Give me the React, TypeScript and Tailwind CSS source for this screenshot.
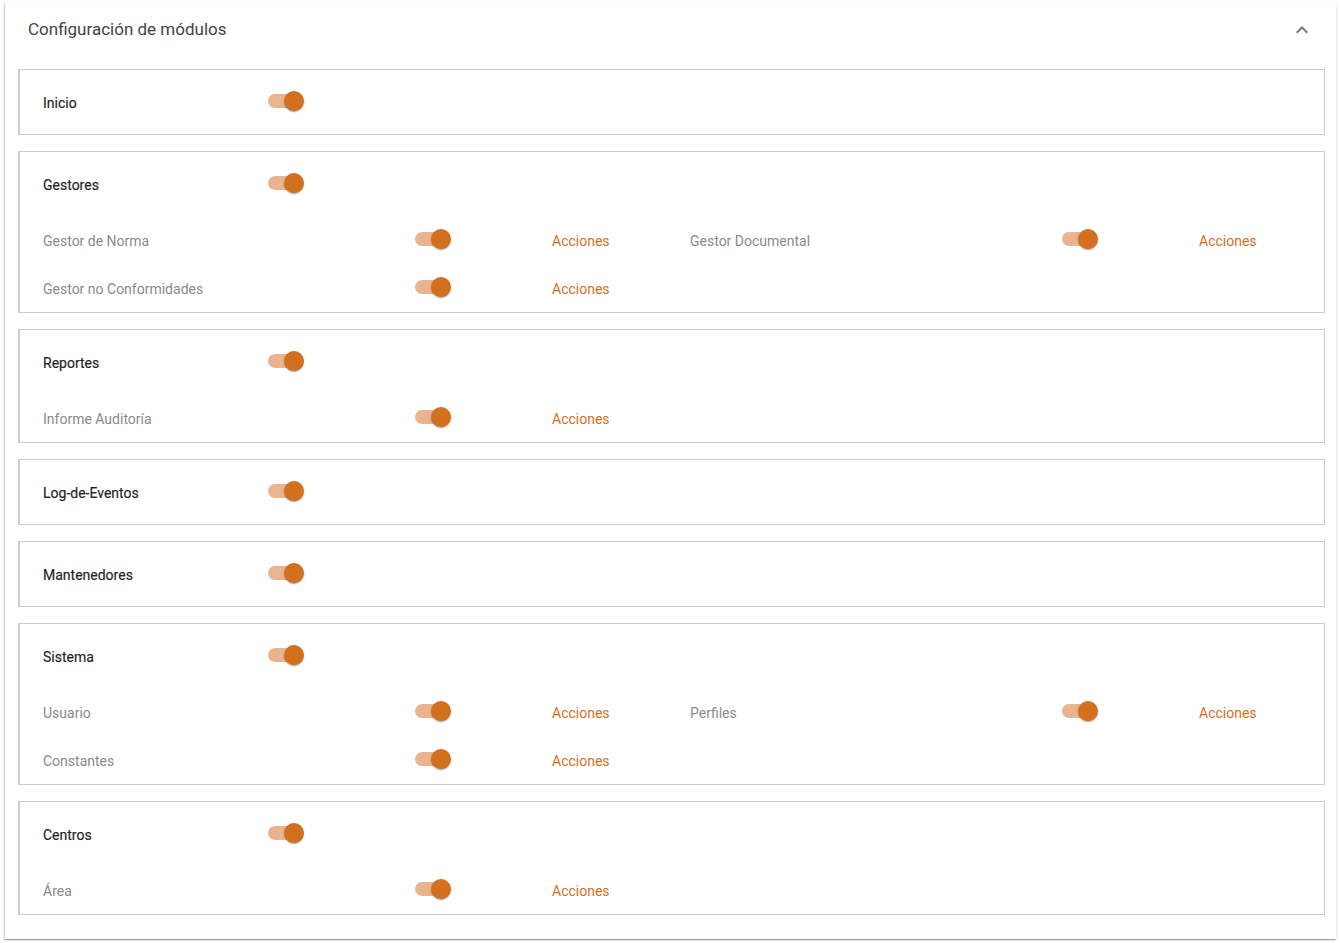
import React from "react";

type Sub = { label: string };
type Mod = { title: string; subs: Sub[] };

const modules: Mod[] = [
  { title: "Inicio", subs: [] },
  {
    title: "Gestores",
    subs: [
      { label: "Gestor de Norma" },
      { label: "Gestor Documental" },
      { label: "Gestor no Conformidades" },
    ],
  },
  { title: "Reportes", subs: [{ label: "Informe Auditoría" }] },
  { title: "Log-de-Eventos", subs: [] },
  { title: "Mantenedores", subs: [] },
  {
    title: "Sistema",
    subs: [{ label: "Usuario" }, { label: "Perfiles" }, { label: "Constantes" }],
  },
  { title: "Centros", subs: [{ label: "Área" }] },
];

function Toggle() {
  return (
    <span className="relative inline-block w-[36px] h-[20px] shrink-0 -translate-y-[2px]">
      <span className="absolute left-0 top-[3px] w-[34px] h-[14px] rounded-full bg-[#e9b48f]" />
      <span className="absolute right-0 top-0 w-[20px] h-[20px] rounded-full bg-[#d2701d] shadow-[0_2px_1px_-1px_rgba(0,0,0,0.2),0_1px_1px_0_rgba(0,0,0,0.14),0_1px_3px_0_rgba(0,0,0,0.12)]" />
    </span>
  );
}

function SubItem({ label }: Sub) {
  return (
    <div className="flex items-center h-[48px]">
      <span className="w-[372px] text-[14px] text-[#8a8a8a]">{label}</span>
      <span className="w-[137px] flex items-center">
        <Toggle />
      </span>
      <span className="text-[14px] text-[#d2701d] cursor-pointer">Acciones</span>
    </div>
  );
}

function ModuleBox({ mod }: { mod: Mod }) {
  return (
    <div className="border border-[#cdcdcd] border-l-2 pt-[9px] pb-[7px] pl-[23px]">
      <div className="flex items-center h-[48px]">
        <span className="w-[225px] text-[14px] font-normal text-[#222222] [-webkit-text-stroke:0.15px_#222222]">
          {mod.title}
        </span>
        <Toggle />
      </div>
      {mod.subs.length > 0 && (
        <div className="grid grid-cols-[647px_647px] mt-[8px] -mb-[8px]">
          {mod.subs.map((s) => (
            <SubItem key={s.label} label={s.label} />
          ))}
        </div>
      )}
    </div>
  );
}

export default function App() {
  return (
    <div
      className="min-h-[943px] bg-white p-[4px]"
      style={{ fontFamily: "Roboto, 'Noto Sans', sans-serif" }}
    >
      <div className="bg-white w-[1332px] h-[935px] shadow-[0_2px_1px_-1px_rgba(0,0,0,0.2),0_1px_1px_0_rgba(0,0,0,0.14),0_1px_3px_0_rgba(0,0,0,0.12)] border-l border-[#d6d6d6]">
        <div className="flex items-center justify-between h-[50px] pt-[2px] pl-[23px] pr-[22px]">
          <span className="text-[17px] text-[#444444]">Configuración de módulos</span>
          <svg width="24" height="24" viewBox="0 0 24 24" fill="#757575">
            <path d="M12 8l-6 6 1.41 1.41L12 10.83l4.59 4.58L18 14z" />
          </svg>
        </div>
        <div className="flex flex-col gap-[16px] mt-[15px] ml-[13px] mr-[11px]">
          {modules.map((m) => (
            <ModuleBox key={m.title} mod={m} />
          ))}
        </div>
      </div>
    </div>
  );
}
